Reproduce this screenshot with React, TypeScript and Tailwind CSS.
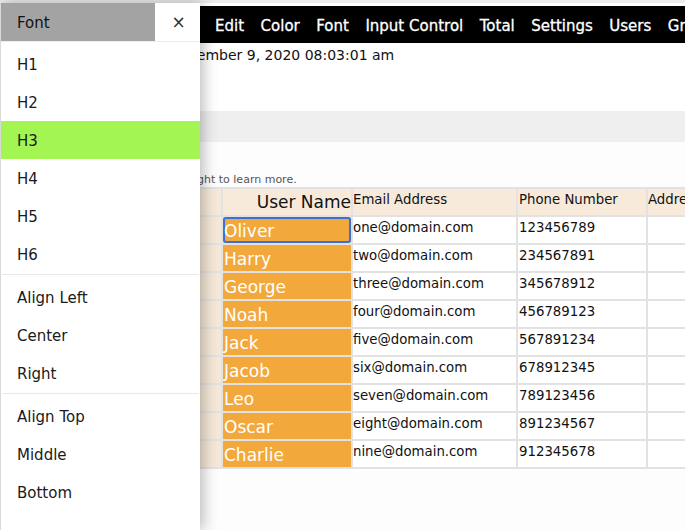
import React from "react";

const menu = ["Edit", "Color", "Font", "Input Control", "Total", "Settings", "Users", "Groups"];

const users = [
  { name: "Oliver", email: "one@domain.com", phone: "123456789" },
  { name: "Harry", email: "two@domain.com", phone: "234567891" },
  { name: "George", email: "three@domain.com", phone: "345678912" },
  { name: "Noah", email: "four@domain.com", phone: "456789123" },
  { name: "Jack", email: "five@domain.com", phone: "567891234" },
  { name: "Jacob", email: "six@domain.com", phone: "678912345" },
  { name: "Leo", email: "seven@domain.com", phone: "789123456" },
  { name: "Oscar", email: "eight@domain.com", phone: "891234567" },
  { name: "Charlie", email: "nine@domain.com", phone: "912345678" }
];

const groups = [
  ["H1", "H2", "H3", "H4", "H5", "H6"],
  ["Align Left", "Center", "Right"],
  ["Align Top", "Middle", "Bottom"]
];

function Drawer() {
  return (
    <div className="absolute left-0 top-[3px] bottom-0 w-[200px] bg-white border-l border-[#d9d9d9] shadow-[3px_0_14px_rgba(0,0,0,0.28)]">
      <div className="flex h-[39px] border-b border-[#ececec]">
        <div className="w-[154px] h-[38px] bg-[#a3a3a3] flex items-center pl-[16px] pt-[2px] text-[15px] text-[#111]">
          Font
        </div>
        <button className="flex-1 flex items-center justify-center text-[17px] text-[#333] pt-[1px] pl-[2px]">
          ×
        </button>
      </div>
      <div className="pt-[3px]">
        {groups.map((g, gi) => (
          <div key={gi}>
            {gi > 0 && <div className="mx-[1px] mt-px mb-[3px] h-px bg-[#e8e8e8]" />}
            {g.map((item) => (
              <div
                key={item}
                className={`h-[38px] flex items-center pl-[16px] pt-[3px] text-[15px] text-[#1a1a1a] ${
                  item === "H3" ? "bg-[#a3f551]" : ""
                }`}
              >
                {item}
              </div>
            ))}
          </div>
        ))}
      </div>
    </div>
  );
}

export default function App() {
  return (
    <div className="relative w-[685px] h-[530px] overflow-hidden bg-[#fdfdfd] font-['DejaVu_Sans',Verdana,sans-serif]">
      <div className="h-[3px] bg-[#ececec]" />
      <div className="h-[3px] bg-white" />
      <nav className="h-[37px] bg-black flex items-center gap-[16.5px] pl-[215px] pt-[4px] text-white text-[15px] whitespace-nowrap [-webkit-text-stroke:0.3px_white]">
        {menu.map((m) => (
          <span key={m}>{m}</span>
        ))}
      </nav>
      <div className="h-[68px] bg-white">
        <p className="pt-[4px] pl-[75px] text-[14px] leading-[16px] text-[#111] whitespace-nowrap">
          Wednesday, September 9, 2020 08:03:01 am
        </p>
      </div>
      <div className="h-[31px] bg-[#efefef]" />
      <p className="mt-[30px] h-[15px] pl-[106px] pt-[1px] text-[11px] leading-[13px] text-[#555] whitespace-nowrap">
        Swipe or scroll right to learn more.
      </p>

      <div className="ml-[170px] w-[600px] grid grid-cols-[51px_128px_163px_128px_120px] auto-rows-[26px] gap-[2px] py-[2px] bg-[#e2e2e2] text-[13.3px] text-[#111]">
        <div className="bg-[#f6e9d8]" />
        <div className="bg-[#f7eadb] text-right text-[17px] leading-[20px] pt-[3px] whitespace-nowrap">
          User Name
        </div>
        <div className="bg-[#f7eadb] leading-[17px] pt-[2px] whitespace-nowrap">Email Address</div>
        <div className="bg-[#f7eadb] leading-[17px] pt-[2px] pl-px whitespace-nowrap">Phone Number</div>
        <div className="bg-[#f7eadb] leading-[17px] pt-[2px] whitespace-nowrap">Address</div>
        {users.map((u, i) => (
          <React.Fragment key={u.name}>
            <div className="bg-[#f5e8d7]" />
            <div
              className={`bg-[#f3a83c] text-white text-[17px] flex items-center pl-px pt-[3px] ${
                i === 0 ? "ring-2 ring-inset ring-[#3c6fd7] rounded-[3px]" : ""
              }`}
            >
              {u.name}
            </div>
            <div className="bg-white leading-[17px] pt-[2px] whitespace-nowrap">{u.email}</div>
            <div className="bg-white leading-[17px] pt-[2px] pl-px">{u.phone}</div>
            <div className="bg-white" />
          </React.Fragment>
        ))}
      </div>

      <Drawer />
    </div>
  );
}
